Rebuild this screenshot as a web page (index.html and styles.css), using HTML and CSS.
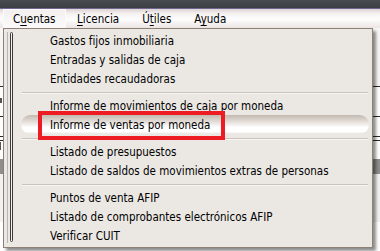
FILE: index.html
```html
<!DOCTYPE html>
<html lang="es">
<head>
    <meta charset="UTF-8">
    <title>Cuentas</title>
    <link rel="stylesheet" href="styles.css">
</head>
<body>
    <div class="titlebar"></div>

    <nav class="menubar">
        <div class="menu-item open">C<u>u</u>entas</div>
        <div class="menu-item"><u>L</u>icencia</div>
        <div class="menu-item">Ú<u>t</u>iles</div>
        <div class="menu-item">A<u>y</u>uda</div>
    </nav>

    <div class="workspace">
        <div class="grid-row tall"></div>
        <div class="grid-row r2"></div>
        <div class="grid-row r3"></div>
        <div class="grid-row r4"></div>
        <div class="grid-row r5"></div>
        <div class="grid-row selected"></div>
        <div class="grid-row rest"></div>
    </div>

    <div class="dropdown">
        <div class="gutter"></div>
        <div class="item">Gastos fijos inmobiliaria</div>
        <div class="item">Entradas y salidas de caja</div>
        <div class="item">Entidades recaudadoras</div>
        <div class="separator"></div>
        <div class="item">Informe de movimientos de caja por moneda</div>
        <div class="item hover">Informe de ventas por moneda</div>
        <div class="separator"></div>
        <div class="item">Listado de presupuestos</div>
        <div class="item">Listado de saldos de movimientos extras de personas</div>
        <div class="separator"></div>
        <div class="item">Puntos de venta AFIP</div>
        <div class="item">Listado de comprobantes electrónicos AFIP</div>
        <div class="item">Verificar CUIT</div>
        <div class="mark"></div>
    </div>
</body>
</html>
```
FILE: styles.css
```css
body {
    margin: 0;
    padding: 0;
    width: 380px;
    height: 251px;
    overflow: hidden;
    font-family: "DejaVu Sans Condensed", "DejaVu Sans", sans-serif;
    font-size: 11.5px;
    color: #000;
    background: #fff;
    position: relative;
}

.titlebar {
    height: 8px;
    background: linear-gradient(#474c50, #3b3f43);
    border-bottom: 1px solid #6e6891;
}

.menubar {
    height: 19px;
    display: flex;
    align-items: stretch;
    padding-left: 3px;
    background: linear-gradient(#ddd3d2 0%, #f6f2f2 25%, #fdfcfc 55%, #ece5e4 100%);
}

.menu-item {
    padding: 0 10px;
    line-height: 19px;
    border: 1px solid transparent;
    border-bottom: none;
}

.menu-item u {
    text-decoration-thickness: 1px;
    text-underline-offset: 2px;
}

.menu-item.open {
    padding: 0 9px;
    border-color: #fbfbfb;
    background: linear-gradient(#f3efef, #fbfafa);
    width: 43px;
}

.menu-item:nth-child(3) {
    padding-left: 11px;
    padding-right: 11px;
}

.workspace {
    height: 223px;
    background: #fff;
}

.grid-row {
    border-bottom: 1px solid #2b2b2b;
    position: relative;
}

.grid-row.tall {
    height: 58px;
    background: #f7f5f5;
}

.grid-row.r2 {
    height: 29px;
}

.grid-row.r2::before,
.grid-row.r5::before {
    content: "";
    position: absolute;
    left: 0;
    top: 11px;
    width: 2px;
    height: 5px;
    background: #555;
}

.grid-row.r3 {
    height: 19px;
}

.grid-row.r4 {
    height: 3px;
}

.grid-row.r5 {
    height: 18px;
    border-bottom: none;
}

.grid-row.r5::before {
    top: 1px;
    width: 1px;
    height: 8px;
}

.grid-row.selected {
    height: 15px;
    background: #8e8e8e;
    border-bottom: none;
}

.grid-row.rest {
    border-bottom: none;
    height: 48px;
    background: #f2f2f2;
}

.dropdown {
    position: absolute;
    left: 3px;
    top: 28px;
    width: 368px;
    height: 215px;
    padding-top: 3px;
    background: #ebe8e4;
    border: 1px solid #8e7f77;
    box-shadow: 3px 3px 3px rgba(0, 0, 0, 0.45);
}

.dropdown::before {
    content: "";
    position: absolute;
    left: 3px;
    top: 3px;
    bottom: 4px;
    border-left: 1px solid #b9b5b1;
}

.gutter {
    position: absolute;
    left: 6px;
    top: 3px;
    bottom: 5px;
    width: 1px;
    border: 1px solid #3e3a38;
    border-radius: 2px;
    background: #f4f2f0;
}

.item {
    height: 19px;
    line-height: 19px;
    padding-left: 46px;
    white-space: nowrap;
}

.item.hover {
    margin: -1px 3px 1px 17px;
    padding-left: 29px;
    border-radius: 10px;
    background: linear-gradient(#c3b9b1 0%, #e3ddd8 35%, #ffffff 65%, #ffffff 88%, #e9e4e0 100%);
    line-height: 21px;
}

.separator {
    height: 8px;
    position: relative;
}

.separator::after {
    content: "";
    position: absolute;
    left: 18px;
    right: 4px;
    top: 3px;
    border-top: 1px solid #cbc2bb;
    border-bottom: 1px solid #f8f6f4;
}

.mark {
    position: absolute;
    left: 34px;
    top: 82px;
    width: 187px;
    height: 29px;
    box-sizing: border-box;
    border: 4px solid #ed1c24;
}
```
